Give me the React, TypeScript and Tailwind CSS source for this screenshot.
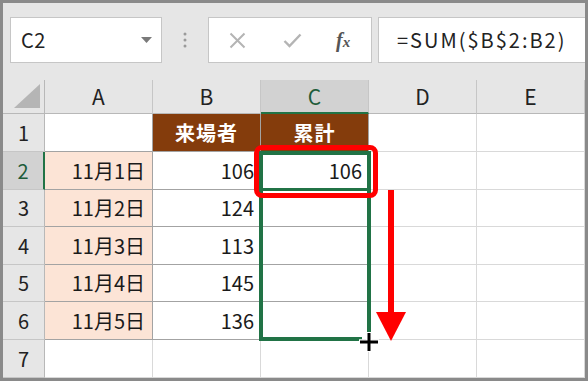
import React from "react";

const COLS = ["A", "B", "C", "D", "E"];
const DATA: string[][] = [
  ["", "来場者", "累計", "", ""],
  ["11月1日", "106", "106", "", ""],
  ["11月2日", "124", "", "", ""],
  ["11月3日", "113", "", "", ""],
  ["11月4日", "145", "", "", ""],
  ["11月5日", "136", "", "", ""],
  ["", "", "", "", ""],
];

function isTable(r: number, c: number) {
  if (r >= 2 && r <= 6 && c >= 0 && c <= 2) return true;
  if (r === 1 && (c === 1 || c === 2)) return true;
  return false;
}

function Cell({ r, c, text }: { r: number; c: number; text: string }) {
  const rightDark = isTable(r, c) || isTable(r, c + 1);
  const bottomDark = isTable(r, c) || isTable(r + 1, c);
  const header = r === 1 && (c === 1 || c === 2);
  const peach = r >= 2 && r <= 6 && c === 0;
  return (
    <div
      className={[
        "flex items-center border-r border-b text-[20px] leading-none",
        rightDark ? "border-r-[#a3a3a3]" : "border-r-[#d9d9d9]",
        bottomDark ? "border-b-[#a3a3a3]" : "border-b-[#d9d9d9]",
        header
          ? "bg-[#843c0c] text-white font-bold justify-center tracking-[1px]"
          : peach
          ? "bg-[#fce4d6] text-[#1a1a1a] justify-end pr-[7px]"
          : "bg-white text-[#1a1a1a] justify-end pr-[6px]",
      ].join(" ")}
    >
      {text}
    </div>
  );
}

export default function App() {
  return (
    <div className="w-[588px] h-[381px] bg-white">
      <div
        className="w-[588px] h-[381px] border-[3px] border-[#8a8a8a] bg-[#e6e6e6] flex flex-col overflow-hidden"
        style={{ fontFamily: '"Noto Sans CJK JP", "Noto Sans", sans-serif' }}
      >
        {/* Toolbar */}
        <div className="h-[77px] shrink-0 flex items-start pt-[14px] pl-[7px]">
          <div className="w-[152px] h-[46px] bg-white border border-[#c6c6c6] flex items-center justify-between pl-[10px] pr-[9px]">
            <span className="text-[20px] text-[#222] leading-none tracking-[0.5px]">C2</span>
            <svg width="11" height="6" viewBox="0 0 11 6">
              <polygon points="0,0 11,0 5.5,6" fill="#7a7a7a" />
            </svg>
          </div>
          <div className="w-[46px] h-[46px] flex items-center justify-center">
            <svg width="4" height="16" viewBox="0 0 4 16">
              <circle cx="2" cy="2" r="1.5" fill="#9a9a9a" />
              <circle cx="2" cy="8" r="1.5" fill="#9a9a9a" />
              <circle cx="2" cy="14" r="1.5" fill="#9a9a9a" />
            </svg>
          </div>
          <div className="w-[164px] h-[46px] bg-white border border-[#c6c6c6] flex items-center">
            <div className="w-[20px]" />
            <svg width="17" height="17" viewBox="0 0 17 17">
              <path d="M1.5 1.5 L15.5 15.5 M15.5 1.5 L1.5 15.5" stroke="#b4b4b4" strokeWidth="2" />
            </svg>
            <div className="w-[37px]" />
            <svg width="19" height="15" viewBox="0 0 19 15">
              <path d="M1.5 8 L6.5 13 L17.5 1.5" stroke="#b4b4b4" strokeWidth="2.4" fill="none" />
            </svg>
            <div className="w-[34px]" />
            <span
              className="text-[20px] italic font-bold text-[#555] leading-none"
              style={{ fontFamily: '"Liberation Serif", "DejaVu Serif", serif' }}
            >
              f<span className="text-[15px]">x</span>
            </span>
          </div>
          <div className="ml-[6px] flex-1 h-[46px] bg-white border border-[#c6c6c6] border-r-0 flex items-center pl-[18px]">
            <span className="text-[20px] text-[#222] leading-none tracking-[2px]">=SUM($B$2:B2)</span>
          </div>
        </div>

        {/* Grid */}
        <div className="relative h-[298px]">
          <div className="grid grid-cols-[42px_108px_108px_108px_108px_108px] grid-rows-[34px_38px_38px_37px_38px_37px_38px_38px]">
            <div className="relative bg-[#e6e6e6] border-r border-b border-[#b8b8b8]">
              <svg className="absolute right-[4px] bottom-[5px]" width="26" height="24" viewBox="0 0 26 24">
                <polygon points="26,0 26,24 0,24" fill="#b5b5b5" />
              </svg>
            </div>
            {COLS.map((col, i) =>
              i === 2 ? (
                <div
                  key={col}
                  className="bg-[#d2d2d2] border-r border-r-[#c6c6c6] border-b-2 border-b-[#217346] flex items-center justify-center text-[21px] text-[#1e5c3a] leading-none"
                >
                  {col}
                </div>
              ) : (
                <div
                  key={col}
                  className="bg-[#e6e6e6] border-r border-r-[#c6c6c6] border-b border-b-[#b8b8b8] flex items-center justify-center text-[21px] text-[#222] leading-none"
                >
                  {col}
                </div>
              )
            )}
            {DATA.map((row, ri) => {
              const r = ri + 1;
              return (
                <React.Fragment key={r}>
                  {r === 2 ? (
                    <div className="bg-[#d2d2d2] border-r-2 border-r-[#217346] border-b border-b-[#c6c6c6] flex items-center justify-center text-[20px] text-[#1e5c3a] leading-none">
                      {r}
                    </div>
                  ) : (
                    <div className="bg-[#e6e6e6] border-r border-r-[#b8b8b8] border-b border-b-[#c6c6c6] flex items-center justify-center text-[20px] text-[#222] leading-none">
                      {r}
                    </div>
                  )}
                  {row.map((t, c) => (
                    <Cell key={c} r={r} c={c} text={t} />
                  ))}
                </React.Fragment>
              );
            })}
          </div>

          {/* Selection overlay (grid origin = page (3,80)) */}
          <div className="absolute left-[256px] top-[71px] w-[4px] h-[190px] bg-[#217346]" />
          <div className="absolute left-[256px] top-[71px] w-[112px] h-[4px] bg-[#217346]" />
          <div className="absolute left-[364px] top-[71px] w-[4px] h-[181px] bg-[#217346]" />
          <div className="absolute left-[256px] top-[257px] w-[103px] h-[4px] bg-[#217346]" />
          <div className="absolute left-[259px] top-[108px] w-[105px] h-[3px] bg-[#217346]" />

          {/* Red rounded rectangle around C2 */}
          <div className="absolute left-[251px] top-[65px] w-[124px] h-[53px] border-[5px] border-[#ff0000] rounded-[8px]" />

          {/* Red arrow */}
          <svg className="absolute left-[370px] top-[110px]" width="34" height="152" viewBox="0 0 34 152">
            <rect x="15" y="0" width="6" height="124" fill="#ff0000" />
            <polygon points="3,122 33,122 18,151" fill="#ff0000" />
          </svg>

          {/* Plus cursor */}
          <svg className="absolute left-[355px] top-[251px]" width="22" height="22" viewBox="0 0 22 22">
            <path d="M11 1 V21 M1 11 H21" stroke="#ffffff" strokeWidth="5.5" />
            <path d="M11 2 V20 M2 11 H20" stroke="#000000" strokeWidth="3" />
          </svg>
        </div>
      </div>
    </div>
  );
}
